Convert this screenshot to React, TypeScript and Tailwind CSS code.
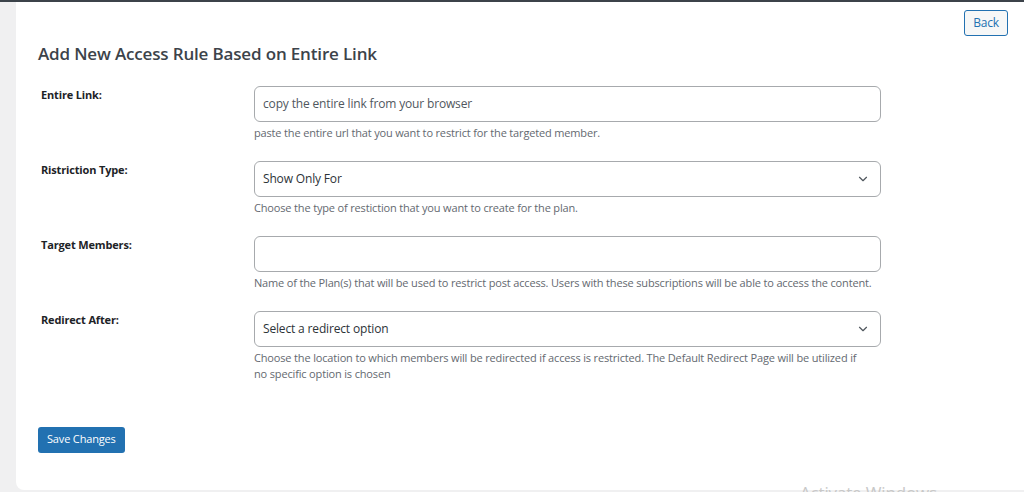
import { ChevronDown } from "lucide-react";

type Row = {
  label: string;
  kind: "input" | "select";
  value?: string;
  placeholder?: string;
  help: string;
  helpWidth: string;
};

const rows: Row[] = [
  {
    label: "Entire Link:",
    kind: "input",
    placeholder: "copy the entire link from your browser",
    help: "paste the entire url that you want to restrict for the targeted member.",
    helpWidth: "w-[627px]",
  },
  {
    label: "Ristriction Type:",
    kind: "select",
    value: "Show Only For",
    help: "Choose the type of restiction that you want to create for the plan.",
    helpWidth: "w-[627px]",
  },
  {
    label: "Target Members:",
    kind: "input",
    help: "Name of the Plan(s) that will be used to restrict post access. Users with these subscriptions will be able to access the content.",
    helpWidth: "w-[627px]",
  },
  {
    label: "Redirect After:",
    kind: "select",
    value: "Select a redirect option",
    help: "Choose the location to which members will be redirected if access is restricted. The Default Redirect Page will be utilized if no specific option is chosen",
    helpWidth: "w-[612px]",
  },
];

export default function App() {
  return (
    <div
      className="relative h-[492px] w-[1024px] overflow-hidden bg-[#f0f0f1] border-t-2 border-[#3c434a] tracking-[-0.01em]"
      style={{ fontFamily: '"Open Sans", "Noto Sans", sans-serif' }}
    >
      <div className="ml-4 h-[488px] rounded-bl-lg bg-white pl-[22px] pr-4 pt-2">
        {/* Back */}
        <div className="flex justify-end">
          <button className="h-[26px] rounded-[3px] border border-[#2271b1] bg-[#f6f7f7] px-[8px] text-[12px] text-[#2271b1]">
            Back
          </button>
        </div>

        <h1 className="mt-[5px] text-[17px] font-semibold text-[#3c434a]">
          Add New Access Rule Based on Entire Link
        </h1>

        {/* Form rows */}
        <div className="mt-[19px] flex flex-col gap-[20px]">
          {rows.map((row) => (
            <div key={row.label} className="flex">
              <div className="w-[216px] shrink-0 pl-[3px] pt-[1px] text-[11px] font-bold text-[#1d2327]">
                {row.label}
              </div>
              <div className="w-[627px]">
                <div
                  className={
                    row.kind === "input"
                      ? "flex h-[36px] items-center justify-between rounded-[6px] border border-[#a7aaad] bg-white pl-[8px] pr-[10px] text-[12px] text-[#50575e]"
                      : "flex h-[36px] items-center justify-between rounded-[6px] border border-[#a7aaad] bg-white pl-[8px] pr-[10px] text-[12px] text-[#2c3338]"
                  }
                >
                  <span>{row.kind === "input" ? row.placeholder : row.value}</span>
                  {row.kind === "select" && (
                    <ChevronDown size={14} strokeWidth={2} className="text-[#50575e]" />
                  )}
                </div>
                <p className={`mt-[3px] text-[11px] leading-4 text-[#646970] ${row.helpWidth}`}>
                  {row.help}
                </p>
              </div>
            </div>
          ))}
        </div>

        <button className="mt-[45px] h-[26px] rounded-[3px] bg-[#2271b1] px-[9px] text-[11px] text-white">
          Save Changes
        </button>
      </div>

      {/* watermark */}
      <div className="absolute left-[800px] top-[478px] text-[17px] text-[#c8c8c8]">
        Activate Windows
      </div>
    </div>
  );
}
